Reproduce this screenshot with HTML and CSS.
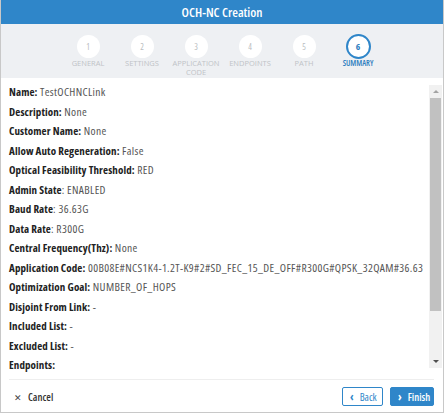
FILE: index.html
```html
<!DOCTYPE html>
<html>
<head>
<meta charset="utf-8">
<link rel="stylesheet" href="styles.css">
</head>
<body>
<div class="dialog">
  <header class="title">OCH-NC Creation</header>
  <nav class="steps">
    <div class="step"><span class="dot">1</span><span class="lbl">GENERAL</span></div>
    <div class="step"><span class="dot">2</span><span class="lbl">SETTINGS</span></div>
    <div class="step"><span class="dot">3</span><span class="lbl">APPLICATION<br>CODE</span></div>
    <div class="step"><span class="dot">4</span><span class="lbl">ENDPOINTS</span></div>
    <div class="step"><span class="dot">5</span><span class="lbl">PATH</span></div>
    <div class="step active"><span class="dot">6</span><span class="lbl">SUMMARY</span></div>
  </nav>
  <main class="body">
    <div class="content">
      <div class="row"><b>Name:</b> TestOCHNCLink</div>
      <div class="row"><b>Description:</b> None</div>
      <div class="row"><b>Customer Name:</b> None</div>
      <div class="row"><b>Allow Auto Regeneration:</b> False</div>
      <div class="row"><b>Optical Feasibility Threshold:</b> RED</div>
      <div class="row"><b>Admin State</b>: ENABLED</div>
      <div class="row"><b>Baud Rate</b>: 36.63G</div>
      <div class="row"><b>Data Rate</b>: R300G</div>
      <div class="row"><b>Central Frequency(Thz):</b> None</div>
      <div class="row"><b>Application Code:</b> 00B08E#NCS1K4-1.2T-K9#2#SD_FEC_15_DE_OFF#R300G#QPSK_32QAM#36.63</div>
      <div class="row"><b>Optimization Goal:</b> NUMBER_OF_HOPS</div>
      <div class="row"><b>Disjoint From Link:</b> -</div>
      <div class="row"><b>Included List:</b> -</div>
      <div class="row"><b>Excluded List:</b> -</div>
      <div class="row"><b>Endpoints:</b></div>
    </div>
    <div class="scrollbar">
      <div class="sb-btn"><span class="arrow-up"></span></div>
      <div class="sb-track"><div class="sb-thumb"></div></div>
      <div class="sb-btn"><span class="arrow-down"></span></div>
    </div>
  </main>
  <footer class="footer">
    <button class="cancel"><span class="x">&#x2715;</span>Cancel</button>
    <div class="nav">
      <button class="back"><span class="chev">&#x2039;</span>Back</button>
      <button class="finish"><span class="chev">&#x203A;</span>Finish</button>
    </div>
  </footer>
</div>
</body>
</html>
```
FILE: styles.css
```css
* { box-sizing: border-box; }
html, body { margin: 0; padding: 0; }
body {
  font-family: "Open Sans", Lato, "Liberation Sans", sans-serif;
  font-stretch: 75%;
  background: #fff;
}
.dialog {
  width: 444px;
  height: 413px;
  border: 1px solid #c8c8c8;
  border-top: none;
  display: flex;
  flex-direction: column;
  overflow: hidden;
}
.title {
  height: 24px;
  background: #2f86c9;
  color: #fff;
  font-size: 13px;
  font-weight: 600;
  font-stretch: 75%;
  line-height: 24px;
  text-align: center;
  flex: none;
}
.steps {
  height: 54px;
  background: #eef0f3;
  display: flex;
  justify-content: center;
  padding-left: 2px;
  flex: none;
}
.step {
  width: 54px;
  display: flex;
  flex-direction: column;
  align-items: center;
  padding-top: 11px;
}
.dot {
  width: 23px;
  height: 23px;
  border-radius: 50%;
  background: #fff;
  color: #b9bcc0;
  font-size: 8.5px;
  display: flex;
  align-items: center;
  justify-content: center;
}
.lbl {
  margin-top: 1px;
  font-size: 7.5px;
  line-height: 8.5px;
  color: #bfc3c7;
  text-align: center;
  font-stretch: 100%;
  white-space: nowrap;
}
.step.active { padding-top: 10px; }
.step.active .dot {
  width: 25px;
  height: 25px;
  border: 2px solid #2f86c9;
  color: #2f7fc0;
  font-weight: 700;
  font-size: 9.5px;
}
.step.active .lbl {
  margin-top: 0;
  color: #2f7fc0;
  font-weight: 600;
  font-stretch: 75%;
  font-size: 8px;
}
.body {
  flex: none;
  height: 301px;
  display: flex;
}
.content {
  flex: 1;
  padding: 4px 0 0 8px;
  overflow: hidden;
}
.row {
  font-size: 11.5px;
  line-height: 19.5px;
  color: #555;
  white-space: nowrap;
  font-stretch: 75%;
  letter-spacing: 0.35px;
}
.row b {
  color: #222;
  font-weight: 700;
  font-size: 11px;
  font-stretch: 75%;
  letter-spacing: 0.1px;
}
.scrollbar {
  width: 13px;
  margin: 7px 1px 11px 0;
  background: #f1f1f1;
  display: flex;
  flex-direction: column;
}
.sb-btn {
  height: 13px;
  display: flex;
  align-items: center;
  justify-content: center;
  flex: none;
}
.arrow-up {
  width: 0; height: 0;
  border-left: 3px solid transparent;
  border-right: 3px solid transparent;
  border-bottom: 3px solid #a3a3a3;
}
.arrow-down {
  width: 0; height: 0;
  border-left: 3px solid transparent;
  border-right: 3px solid transparent;
  border-top: 3px solid #505050;
}
.sb-track {
  flex: 1;
  padding: 0 1px;
}
.sb-thumb {
  height: 213px;
  background: #c1c1c1;
}
.footer {
  flex: 1;
  margin: 0 9px 0 8px;
  border-top: 1px solid #eeeeee;
  display: flex;
  justify-content: space-between;
  align-items: flex-start;
  padding-top: 7px;
}
button {
  font-family: inherit;
  font-stretch: 75%;
  font-size: 10.5px;
  cursor: pointer;
}
.cancel {
  border: none;
  background: none;
  color: #333;
  padding: 0;
  margin: 2px 0 0 5px;
  height: 16px;
  display: flex;
  align-items: center;
  font-weight: 600;
}
.cancel .x { font-size: 9px; font-weight: 400; margin-right: 6px; color: #444; }
.nav { display: flex; gap: 7px; }
.back, .finish {
  height: 19px;
  border-radius: 2px;
  display: flex;
  align-items: center;
  padding: 0 6px 0 7px;
}
.back {
  width: 41px;
  border: 1px solid #2f86c9;
  background: #fff;
  color: #2f86c9;
}
.finish {
  width: 44px;
  border: 1px solid #2f86c9;
  background: #2f86c9;
  color: #fff;
  font-weight: 600;
}
.chev { font-size: 12px; line-height: 10px; margin-right: 6px; font-weight: 700; }
```
